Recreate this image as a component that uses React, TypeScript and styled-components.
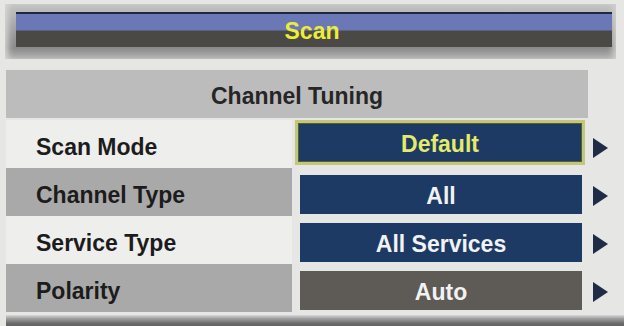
import React from "react";
import styled, { createGlobalStyle } from "styled-components";

const GlobalStyle = createGlobalStyle`
	html, body {
		margin: 0;
		padding: 0;
		background: #e6e6e4;
	}
	body {
		font-family: "Liberation Sans", Arial, sans-serif;
	}
`;

type Row = {
	label: string;
	value: string;
	shade: "light" | "dark";
	selected?: boolean;
	muted?: boolean;
};

const rows: Row[] = [
	{ label: "Scan Mode", value: "Default", shade: "light", selected: true },
	{ label: "Channel Type", value: "All", shade: "dark" },
	{ label: "Service Type", value: "All Services", shade: "light" },
	{ label: "Polarity", value: "Auto", shade: "dark", muted: true },
];

const App = () => {
	return (
		<Screen>
			<GlobalStyle />
			<TitleFrame>
				<TitleBar>
					<TitleText>Scan</TitleText>
				</TitleBar>
			</TitleFrame>
			<Menu>
				<Header>Channel Tuning</Header>
				{rows.map((row) => (
					<MenuRow key={row.label}>
						<Label $shade={row.shade}>{row.label}</Label>
						<ValueCell>
							<ValueBox $selected={row.selected} $muted={row.muted}>
								{row.value}
							</ValueBox>
						</ValueCell>
						<ArrowCell>
							<Arrow />
						</ArrowCell>
					</MenuRow>
				))}
			</Menu>
			<BottomBar />
		</Screen>
	);
};

export default App;

const Screen = styled.div`
	width: 624px;
	height: 326px;
	overflow: hidden;
	padding-top: 4px;
	box-sizing: border-box;
`;

const TitleFrame = styled.div`
	margin: 0 8px 0 5px;
	height: 55px;
	box-sizing: border-box;
	padding: 8px 4px 12px 11px;
	background: linear-gradient(
		to bottom,
		#c4c4c4 0%,
		#9a9a9a 55%,
		#8a8a8a 80%,
		#b4b4b4 100%
	);
	box-shadow: inset 6px 0 6px -3px #d8d8d8, inset -6px 0 6px -3px #d0d0d0;
`;

const TitleBar = styled.div`
	height: 100%;
	border-top: 2px solid #1e2840;
	background: linear-gradient(to bottom, #6b78b6 0%, #6b78b6 48%, #4a4946 52%, #4a4946 100%);
	display: flex;
	align-items: center;
	justify-content: center;
	box-sizing: border-box;
`;

const TitleText = styled.span`
	color: #ecec3a;
	font-weight: bold;
	font-size: 23px;
	padding-right: 4px;
	padding-top: 2px;
`;

const Menu = styled.div`
	margin-top: 11px;
	display: flex;
	flex-direction: column;
`;

const Header = styled.div`
	margin-left: 6px;
	width: 582px;
	height: 48px;
	margin-bottom: 2px;
	background: #bcbcbc;
	color: #262626;
	font-weight: bold;
	font-size: 23px;
	display: flex;
	align-items: center;
	justify-content: center;
	padding-top: 4px;
	box-sizing: border-box;
`;

const MenuRow = styled.div`
	display: grid;
	grid-template-columns: 286px 296px 42px;
	height: 48px;
	margin-left: 6px;
`;

const Label = styled.div<{ $shade: "light" | "dark" }>`
	background: ${(p) => (p.$shade === "light" ? "#eeeeec" : "#a9a9a9")};
	color: #1c1c1c;
	font-weight: bold;
	font-size: 23px;
	padding-left: 30px;
	padding-top: 6px;
	display: flex;
	align-items: center;
`;

const ValueCell = styled.div`
	display: flex;
	align-items: flex-end;
	padding: 0 6px 2px 8px;
`;

const ValueBox = styled.div<{ $selected?: boolean; $muted?: boolean }>`
	flex: 1;
	height: ${(p) => (p.$selected ? "45px" : "39px")};
	margin: ${(p) => (p.$selected ? "0 -3px 1px -5px" : "0")};
	box-sizing: border-box;
	background: ${(p) => (p.$muted ? "#5e5a56" : "#1c3a64")};
	border: ${(p) => (p.$selected ? "3px solid #c3c77a" : "none")};
	outline: ${(p) => (p.$selected ? "1px solid #5a5e30" : "none")};
	outline-offset: -4px;
	color: ${(p) => (p.$selected ? "#e4ea6a" : "#f2f2f2")};
	font-weight: bold;
	font-size: 23px;
	display: flex;
	align-items: center;
	justify-content: center;
	padding-top: 3px;
`;

const ArrowCell = styled.div`
	display: flex;
	align-items: flex-end;
	padding: 0 0 10px 5px;
`;

const Arrow = styled.div`
	width: 0;
	height: 0;
	border-top: 10px solid transparent;
	border-bottom: 10px solid transparent;
	border-left: 15px solid #1e2c45;
`;

const BottomBar = styled.div`
	margin-top: 3px;
	height: 14px;
	margin-left: 6px;
	background: linear-gradient(to bottom, #d8d8d8 0%, #a0a0a0 25%, #6a6a6a 60%, #5c5c5c 100%);
`;
